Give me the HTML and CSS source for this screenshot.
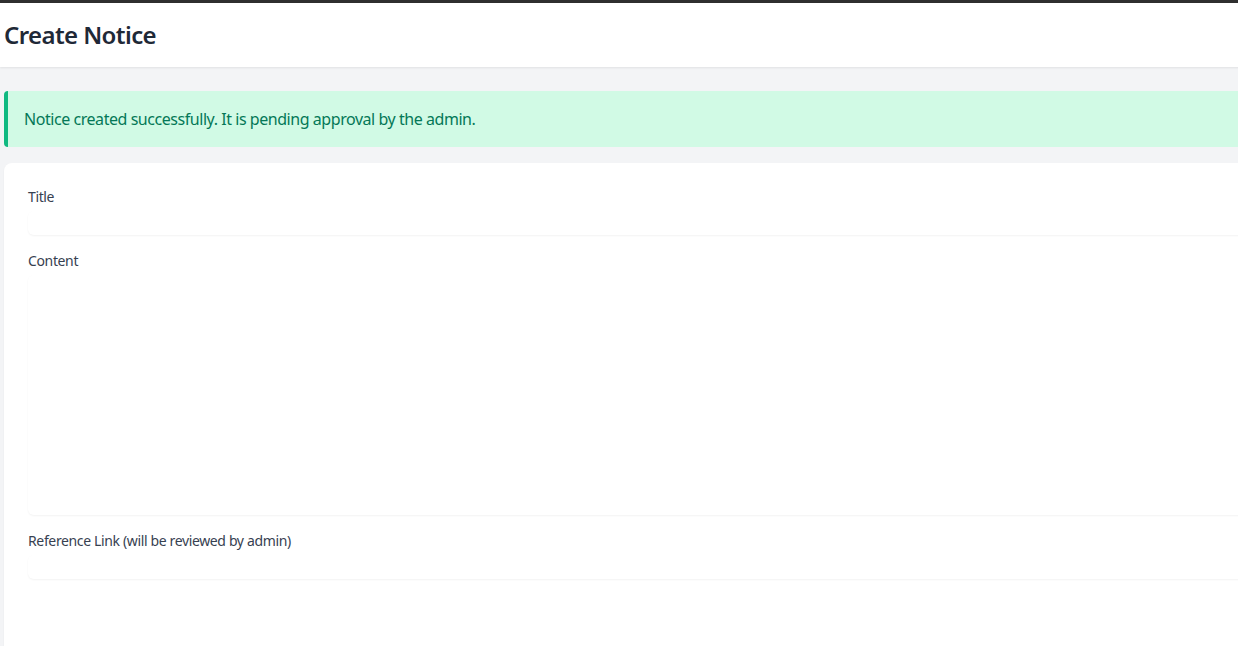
FILE: index.html
```html
<!DOCTYPE html>
<html lang="en">
<head>
    <meta charset="UTF-8">
    <title>Create Notice</title>
    <link rel="stylesheet" href="styles.css">
</head>
<body>
<div class="topbar"></div>
<div class="page">
    <header class="page-header">
        <h2>Create Notice</h2>
    </header>

    <main class="content">
        <div class="alert-success">
            Notice created successfully. It is pending approval by the admin.
        </div>

        <div class="card">
            <form method="POST" action="/notices" class="notice-form">
                <div class="field">
                    <label for="title">Title</label>
                    <input type="text" id="title" name="title">
                </div>
                <div class="field">
                    <label for="content">Content</label>
                    <textarea id="content" name="content" rows="10"></textarea>
                </div>
                <div class="field">
                    <label for="link">Reference Link (will be reviewed by admin)</label>
                    <input type="url" id="link" name="link">
                </div>
            </form>
        </div>
    </main>
</div>
</body>
</html>
```

FILE: styles.css
```css
* {
    box-sizing: border-box;
}
html, body {
    margin: 0;
    padding: 0;
    height: 100%;
}
body {
    font-family: "Noto Sans", sans-serif;
    background-color: #f3f4f6;
    color: #1f2937;
    overflow: hidden;
}
.topbar {
    height: 3px;
    background-color: #2f2f2f;
}
.page {
    width: 1300px;
}
.page-header {
    background-color: #fff;
    padding: 16px 4px;
    box-shadow: 0 1px 2px rgba(0,0,0,0.08);
}
.page-header h2 {
    margin: 0;
    font-size: 24px;
    line-height: 32px;
    font-weight: 600;
    letter-spacing: -0.6px;
    color: #1f2937;
}
.content {
    padding: 24px 0 0 4px;
}
.alert-success {
    background-color: #d1fae5;
    border-left: 4px solid #10b981;
    border-radius: 4px 0 0 4px;
    color: #047857;
    padding: 16px;
    font-size: 16px;
    line-height: 24px;
    letter-spacing: -0.45px;
    margin-bottom: 16px;
}
.card {
    background-color: #fff;
    border-radius: 8px 0 0 0;
    padding: 24px;
    min-height: 600px;
    box-shadow: 0 1px 2px rgba(0,0,0,0.05);
}
.notice-form {
    display: flex;
    flex-direction: column;
    gap: 16px;
}
.field label {
    display: block;
    font-size: 14px;
    line-height: 20px;
    letter-spacing: -0.36px;
    color: #374151;
}
.field input,
.field textarea {
    display: block;
    width: 100%;
    margin-top: 4px;
    border: 0;
    padding: 0;
    font-family: inherit;
    font-size: 16px;
    line-height: 24px;
    border-radius: 6px;
    box-shadow: 0 1px 2px rgba(0,0,0,0.05);
    background-color: #fff;
    resize: none;
    outline: none;
}
.field textarea {
    height: 240px;
}
```
